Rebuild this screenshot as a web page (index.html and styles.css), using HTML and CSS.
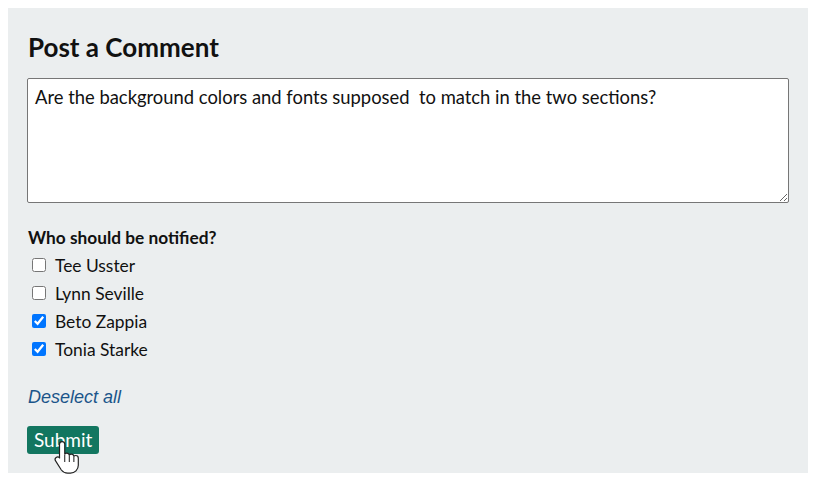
FILE: index.html
```html
<!DOCTYPE html>
<html>
<head>
<meta charset="utf-8">
<link rel="stylesheet" href="styles.css">
</head>
<body>
<div class="panel">
  <h2 class="title">Post a Comment</h2>
  <textarea class="comment">Are the background colors and fonts supposed  to match in the two sections?</textarea>
  <div class="notify">
    <div class="notify-label">Who should be notified?</div>
    <label class="row"><input type="checkbox"><span>Tee Usster</span></label>
    <label class="row"><input type="checkbox"><span>Lynn Seville</span></label>
    <label class="row"><input type="checkbox" checked><span>Beto Zappia</span></label>
    <label class="row"><input type="checkbox" checked><span>Tonia Starke</span></label>
  </div>
  <a class="deselect" href="#">Deselect all</a>
  <div class="actions">
    <button class="submit">Submit</button>
    <svg class="cursor" width="30" height="40" viewBox="0 0 23 30">
      <path d="M7 2.5c1.1 0 2 .9 2 2V12c.3-.5.9-.8 1.6-.8 1 0 1.8.7 1.9 1.6.3-.5.9-.8 1.6-.8 1 0 1.8.7 1.9 1.7.4-.4.9-.6 1.4-.6 1.1 0 2 .9 2 2v5.5c0 3.3-2.7 6-6 6h-2.2c-2 0-3.6-.9-4.8-2.4L2.1 17.4c-.7-.9-.6-2.1.3-2.8.8-.6 2-.5 2.7.3L5 15V4.5c0-1.1.9-2 2-2z" fill="#fff" stroke="#222" stroke-width="0.9" stroke-linejoin="round"/>
      <path d="M12.5 13v5M16 14v4M9 12.5v5.5" stroke="#222" stroke-width="0.8" fill="none"/>
    </svg>
  </div>
</div>
</body>
</html>
```
FILE: styles.css
```css
html, body {
  margin: 0;
  background: #ffffff;
}
body {
  padding: 8px;
  font-family: Lato, "Open Sans", sans-serif;
  color: #111;
}
.panel {
  background: #ebeeef;
  height: 465px;
  box-sizing: border-box;
  padding: 25px 19px 0 19px;
  display: flex;
  flex-direction: column;
  align-items: flex-start;
}
.title {
  margin: 0;
  font-size: 26px;
  font-weight: 700;
  line-height: 28px;
  color: #111;
  padding-left: 1px;
}
.comment {
  margin-top: 17px;
  width: 762px;
  height: 125px;
  box-sizing: border-box;
  border: 1px solid #767676;
  border-radius: 2px;
  padding: 6px 7px;
  font-family: Lato, sans-serif;
  font-size: 18.4px;
  line-height: 24px;
  color: #111;
  background: #fff;
  resize: vertical;
}
.notify {
  margin-top: 24px;
  display: flex;
  flex-direction: column;
  padding-left: 1px;
}
.notify-label {
  font-weight: 700;
  font-size: 17.3px;
  line-height: 22px;
  margin-bottom: 2px;
}
.row {
  display: flex;
  align-items: center;
  height: 28px;
  font-size: 17.4px;
}
.row input {
  margin: 0 9px 0 4px;
  width: 14px;
  height: 14px;
}
.deselect {
  margin-top: 24px;
  font-family: "Liberation Sans", Arial, sans-serif;
  font-style: italic;
  font-size: 18px;
  color: #1b558a;
  text-decoration: none;
  padding-left: 1px;
  line-height: 20px;
}
.actions {
  position: relative;
  margin-top: 19px;
}
.submit {
  background: #127660;
  color: #fff;
  border: none;
  border-radius: 3px;
  font-family: Lato, sans-serif;
  font-size: 19px;
  height: 28px;
  padding: 0 7px;
  line-height: 28px;
  cursor: pointer;
}
.cursor {
  position: absolute;
  left: 26px;
  top: 12px;
}
```
